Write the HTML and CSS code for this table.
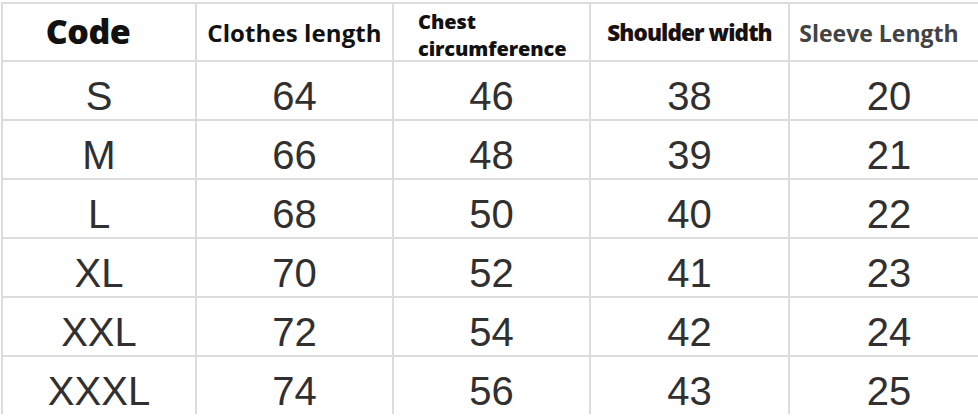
FILE: index.html
```html
<!DOCTYPE html>
<html>
<head>
<meta charset="utf-8">
<link rel="stylesheet" href="styles.css">
</head>
<body>
<div class="sheet">
  <div class="cell head h-code">Code</div>
  <div class="cell head h-len">Clothes length</div>
  <div class="cell head h-chest">Chest<br>circumference</div>
  <div class="cell head h-sh">Shoulder width</div>
  <div class="cell head h-sl">Sleeve Length</div>

  <div class="cell">S</div><div class="cell">64</div><div class="cell">46</div><div class="cell">38</div><div class="cell">20</div>
  <div class="cell">M</div><div class="cell">66</div><div class="cell">48</div><div class="cell">39</div><div class="cell">21</div>
  <div class="cell">L</div><div class="cell">68</div><div class="cell">50</div><div class="cell">40</div><div class="cell">22</div>
  <div class="cell">XL</div><div class="cell">70</div><div class="cell">52</div><div class="cell">41</div><div class="cell">23</div>
  <div class="cell">XXL</div><div class="cell">72</div><div class="cell">54</div><div class="cell">42</div><div class="cell">24</div>
  <div class="cell">XXXL</div><div class="cell">74</div><div class="cell">56</div><div class="cell">43</div><div class="cell">25</div>
</div>
</body>
</html>
```
FILE: styles.css
```css
html, body {
  margin: 0;
  padding: 0;
  background: #ffffff;
  overflow: hidden;
}
body {
  width: 978px;
  height: 416px;
}
.sheet {
  display: grid;
  grid-template-columns: 192px 195px 195px 197px 198px;
  grid-template-rows: 56px repeat(6, 57px);
  gap: 2px;
  background: #dcdcdc;
  padding: 2px 0 0 2px;
  margin: 2px 0 0 1px;
  width: max-content;
}
.cell {
  background: #ffffff;
  display: flex;
  align-items: center;
  justify-content: center;
  font-family: "Liberation Sans", Arial, sans-serif;
  font-size: 40px;
  color: #303030;
  line-height: 1;
  padding-top: 10px;
}
.head {
  font-family: "Open Sans", "DejaVu Sans", sans-serif;
  font-weight: 700;
  color: #111111;
  padding-top: 0;
}
.h-code {
  font-size: 34px;
  font-weight: 800;
  letter-spacing: -0.5px;
  padding-right: 22px;
  padding-bottom: 2px;
}
.h-len {
  font-size: 24px;
  letter-spacing: 0.1px;
  padding-top: 2px;
}
.h-chest {
  font-size: 20px;
  font-weight: 800;
  line-height: 27px;
  letter-spacing: -0.1px;
  justify-content: flex-start;
  padding-left: 24px;
  padding-top: 6px;
  text-align: left;
}
.h-sh {
  font-size: 22.5px;
  font-weight: 800;
  letter-spacing: -0.9px;
  color: #1a1010;
  padding-top: 3px;
}
.h-sl {
  font-size: 23px;
  font-weight: 700;
  color: #434343;
  padding-right: 20px;
  padding-top: 3px;
}
```
